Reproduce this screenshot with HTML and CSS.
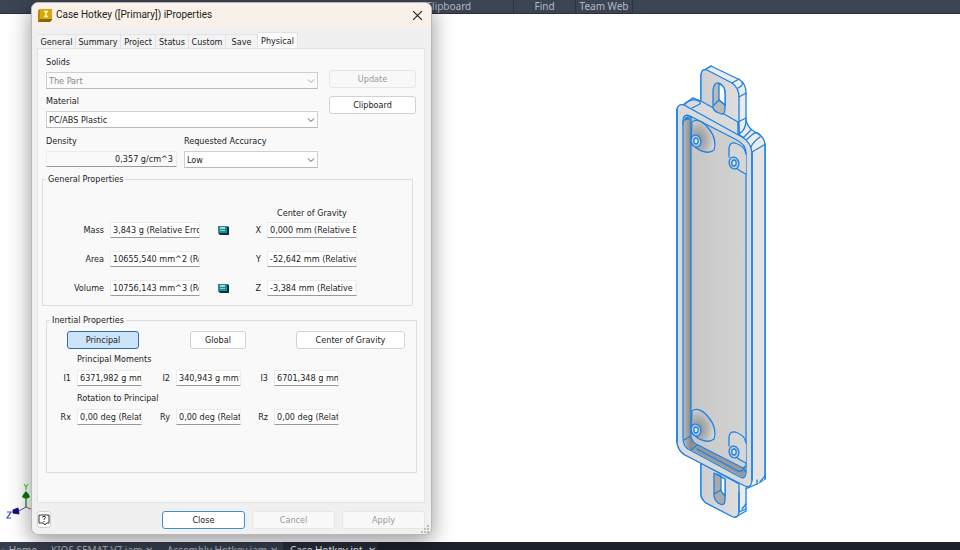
FILE: index.html
```html
<!DOCTYPE html>
<html lang="en">
<head>
<meta charset="utf-8">
<title>Case Hotkey iProperties</title>
<link rel="stylesheet" href="styles.css">
</head>
<body>
<header class="ribbon">
  <span class="panel-name panel-clip">Clipboard</span>
  <span class="panel-name panel-find">Find</span>
  <span class="panel-name panel-team">Team Web</span>
</header>

<main class="canvas">
  <svg class="model" viewBox="670 60 100 462" aria-hidden="true">
    <defs>
      <linearGradient id="floor" x1="0" x2="1"><stop offset="0" stop-color="#c3c3c3"/><stop offset=".5" stop-color="#cdcdcd"/><stop offset="1" stop-color="#d2d2d2"/></linearGradient>
      <linearGradient id="wall" x1="0" x2="1"><stop offset="0" stop-color="#b5b5b5"/><stop offset=".5" stop-color="#8a8a8a"/><stop offset="1" stop-color="#a8a8a8"/></linearGradient>
      <linearGradient id="lip" x1="0" y1="0" x2="1" y2="0"><stop offset="0" stop-color="#cfcfcf"/><stop offset="1" stop-color="#dedede"/></linearGradient>
      <radialGradient id="boss" cx=".3" cy=".6" r=".7"><stop offset="0" stop-color="#8f8f8f"/><stop offset=".5" stop-color="#b0b0b0"/><stop offset="1" stop-color="#dadada"/></radialGradient>
    </defs>
    <g stroke="#1b82e6" stroke-width="1.3" stroke-linejoin="round" stroke-linecap="round" fill="none">
      <path fill="#ececec" d="M701 102V76Q701 71 706 69L711 66L740 80Q746 84 746 93V118Q746 125 752 130L760 135Q765 139 765 146V479L757 484L748 488L746 488V511L735 517.500L706 503Q701 499 701 494V463L685 455Q677 450 677 441V110Q677 106 683 105L693 98Z"/>
      <path fill="url(#lip)" d="M701 102V76Q701 68 707 70L732 83Q739 88 739 97V137Z"/>
      <path d="M706 69l5-3M732 83l7-4M739 97l7-4M738 88q6-3 4-6"/>
      <path fill="url(#lip)" d="M701 463V494Q701 499 706 503L732 516.500Q738 519 739 512V484Z"/>
      <path d="M739 493V512M739 512l7-3M746 504l-4 5"/>
      <path fill="#dadada" d="M683 105L693 98L701 101L738 122L740 137L746 140Z"/>
      <path d="M684 105q5-6 12-5q5 1 4 4l-8 4M738 122v13M739 134q7-4 7-14M738 122l8-4M739 135q5 2 4 3l8-8M746 140l7-6q4-3 7 1M751 147q2-5 9-10M752 152l12-7"/>
      <path fill="#e4e4e4" d="M752 153L765 146V479L757 484V478L752 481Z" stroke="none"/>
      <path d="M757 484V480M760 482l5-6"/>
      <path fill="#dadada" d="M677 110Q678 103 684 105L742 137Q751 142 752 153V480Q751 490 743 485L685 455Q677 450 677 441Z"/>
      <path fill="url(#floor)" d="M683 122Q683 113 690 116L735 139Q746 144 746 153V471Q746 480 740 477L690 450Q683 447 683 438Z"/>
      <path fill="url(#wall)" stroke="none" d="M684 120Q684 116 691 117V436Q692 443 698 445L691 450Q684 447 684 438Z"/>
      <path fill="#999" stroke="none" d="M698 445L743 468L746 466V472Q745 479 740 476L690 449Z"/>
      <path d="M685 120q1-4 6-3V436Q692 443 698 445L743 468L746 466M684 440l7-4M691 450l6-5M697 449L738 471q5 1 6-3M743 468l3 4M683 124q-1-5 6-5"/>
      <path d="M765 144V479M752 153V480M677 110V441" stroke-width="1.500"/>
      <g id="bosses">
        <path fill="url(#boss)" d="M692 122C697 118 704 122 709 129C715 136 716 145 714 150C708 155 698 151 691 143Z"/>
        <ellipse cx="696" cy="141" rx="4.800" ry="6" fill="#c9cdd2" transform="rotate(-15 696 141)"/>
        <ellipse cx="696" cy="141" rx="2.200" ry="3" fill="#dfe4ea"/>
        <path fill="#d6d6d6" stroke="none" d="M729 157V148Q730 142 735 143Q745 146 746 155V174L737 168Z"/>
        <path d="M729 157V148Q730 142 735 143Q745 146 746 154M736 168Q741 172 746 174"/>
        <ellipse cx="734" cy="163" rx="4.800" ry="6" fill="#c9cdd2" transform="rotate(-15 734 163)"/>
        <ellipse cx="734" cy="163" rx="2.200" ry="3" fill="#dfe4ea"/>
      </g>
      <use href="#bosses" y="289"/>
      <path fill="#b9b9b9" d="M713 107V90Q714 82 719 83Q725 86 725 93V110Q724 116 719 113Q713 111 713 107Z"/>
      <path fill="#fff" d="M719 84Q725 86 725 93V105L719 100Z"/>
      <path d="M714 105l5-5M719 100l6 5"/>
      <path fill="#aaa" d="M714 473V496Q715 502 720 504Q725 506 725 500V479Z"/>
      <path fill="#fff" d="M721 477L725 479V496L721 491Z"/>
      <path d="M714 494l7-4M717 474l4 2"/>
    </g>
  </svg>
  <svg class="triad" viewBox="0 0 32 42" aria-hidden="true">
    <path d="M21 13v10" stroke="#2aa02a" stroke-width="1.500"/>
    <path d="M17 13q1-3 4-6q3 3 4 6q-4 3-8 0z" fill="#067a10"/>
    <path d="M19 0l2 3l2-3M21 3v3" fill="none" stroke="#4bd14b" stroke-width="1.200"/>
    <path d="M21 23l-9 5" stroke="#4a4ab0"/><path d="M21 23l9 4" stroke="#b04a4a"/>
    <path d="M8 26l5-2l1 6l-6-1z" fill="#10107c" stroke="#10107c"/>
    <path d="M2 28h4l-4 6h4" fill="none" stroke="#4545dd" stroke-width="1.200"/>
  </svg>
</main>

<nav class="doc-tabs">
  <a class="doc doc-home" href="#">⌂ Home</a>
  <a class="doc" href="#">KIOS SEMAT V7.iam ✕</a>
  <a class="doc" href="#">Assembly Hotkey.iam ✕</a>
  <a class="doc doc-active" href="#">Case Hotkey.ipt&nbsp; ✕</a>
</nav>

<section class="dialog" role="dialog" aria-labelledby="dlg-title">
  <div class="titlebar">
    <svg class="app-icon" viewBox="0 0 14 13" aria-hidden="true"><path d="M2 0h12v11l-2 2H0V2z" fill="#8a6500"/><path d="M2 0h12v10H2z" fill="#d6a80c"/><path d="M0 2l2-2v10l-2 3z" fill="#b98b00"/><path d="M6 2.500h4M8 2.500v5M6 7.500h4" stroke="#fff8d8" stroke-width="1.300"/></svg>
    <h1 id="dlg-title">Case Hotkey ([Primary]) iProperties</h1>
    <button class="close-x" type="button" aria-label="Close window"><svg viewBox="0 0 10 10"><path d="M1 1l8 8M9 1l-8 8" stroke="#222" stroke-width="1.100"/></svg></button>
  </div>

  <div class="tabs" role="tablist">
    <button type="button" role="tab">General</button>
    <button type="button" role="tab">Summary</button>
    <button type="button" role="tab">Project</button>
    <button type="button" role="tab">Status</button>
    <button type="button" role="tab">Custom</button>
    <button type="button" role="tab">Save</button>
    <button type="button" role="tab" class="selected" aria-selected="true">Physical</button>
  </div>

  <form class="sheet">
    <div class="top">
      <div class="fields">
        <label for="solids">Solids</label>
        <div class="combo disabled"><select id="solids" disabled><option>The Part</option></select><svg viewBox="0 0 8 8"><path d="M1 2.500l3 3l3-3"/></svg></div>
        <label for="material">Material</label>
        <div class="combo"><select id="material"><option>PC/ABS Plastic</option></select><svg viewBox="0 0 8 8"><path d="M1 2.500l3 3l3-3"/></svg></div>
        <div class="pair">
          <div class="density">
            <label for="density">Density</label>
            <input id="density" class="right" value="0,357 g/cm^3" readonly>
          </div>
          <div class="accuracy">
            <label for="accuracy">Requested Accuracy</label>
            <div class="combo"><select id="accuracy"><option>Low</option></select><svg viewBox="0 0 8 8"><path d="M1 2.500l3 3l3-3"/></svg></div>
          </div>
        </div>
      </div>
      <div class="actions">
        <button type="button" disabled>Update</button>
        <button type="button">Clipboard</button>
      </div>
    </div>

    <fieldset class="general">
      <legend>General Properties</legend>
      <div class="props">
        <span class="cog">Center of Gravity</span>
        <label for="mass">Mass</label><input id="mass" value="3,843 g (Relative Error = 0,1%)">
        <svg class="calc" viewBox="0 0 12 10" aria-hidden="true"><path d="M1 1h9l2 1v8H3l-2-2z" fill="#06354a"/><path d="M1 1h9v7H1z" fill="#238b91"/><path d="M3 3h5" stroke="#c9f3ed" stroke-width="1.500"/><path d="M3 5.500h5" stroke="#7ed0cc"/></svg>
        <label for="cx">X</label><input id="cx" value="0,000 mm (Relative Error = 0,1%)">
        <label for="area">Area</label><input id="area" value="10655,540 mm^2 (Relative Error)"><span></span>
        <label for="cy">Y</label><input id="cy" value="-52,642 mm (Relative Error)">
        <label for="volume">Volume</label><input id="volume" value="10756,143 mm^3 (Relative Error)">
        <svg class="calc" viewBox="0 0 12 10" aria-hidden="true"><path d="M1 1h9l2 1v8H3l-2-2z" fill="#06354a"/><path d="M1 1h9v7H1z" fill="#238b91"/><path d="M3 3h5" stroke="#c9f3ed" stroke-width="1.500"/><path d="M3 5.500h5" stroke="#7ed0cc"/></svg>
        <label for="cz">Z</label><input id="cz" value="-3,384 mm (Relative Error)">
      </div>
    </fieldset>

    <fieldset class="inertial">
      <legend>Inertial Properties</legend>
      <div class="modes">
        <button type="button" class="pressed" aria-pressed="true">Principal</button>
        <button type="button" class="global">Global</button>
        <button type="button" class="wide">Center of Gravity</button>
      </div>
      <h2>Principal Moments</h2>
      <div class="triple">
        <label for="i1">I1</label><input id="i1" value="6371,982 g mm^2">
        <label for="i2">I2</label><input id="i2" value="340,943 g mm^2">
        <label for="i3">I3</label><input id="i3" value="6701,348 g mm^2">
      </div>
      <h2>Rotation to Principal</h2>
      <div class="triple">
        <label for="rx">Rx</label><input id="rx" value="0,00 deg (Relative Error)">
        <label for="ry">Ry</label><input id="ry" value="0,00 deg (Relative Error)">
        <label for="rz">Rz</label><input id="rz" value="0,00 deg (Relative Error)">
      </div>
    </fieldset>
  </form>

  <footer class="foot">
    <button class="help" type="button" aria-label="Help"><svg viewBox="0 0 12 12"><path d="M1 1h10v8H8.500L7 11L5.500 9H1z" fill="#fff" stroke="#333"/><path d="M4.500 3.500q0-1.200 1.500-1.200t1.500 1.200q0 .8-1.500 1.500v.8M6 7v1" fill="none" stroke="#222"/></svg></button>
    <button class="primary" type="button">Close</button>
    <button type="button" disabled>Cancel</button>
    <button type="button" disabled>Apply</button>
  </footer>
  <svg class="grip" viewBox="0 0 8 8" aria-hidden="true"><path d="M6 0h2v2H6zM3 3h2v2H3zM6 3h2v2H6zM0 6h2v2H0zM3 6h2v2H3zM6 6h2v2H6z" fill="#bbb"/></svg>
</section>
</body>
</html>
```
FILE: styles.css
```css
* { box-sizing: border-box; }

body {
  margin: 0;
  min-height: 100vh;
  display: flex;
  flex-direction: column;
  position: relative;
  overflow: hidden;
  background: #fff;
  color: #222;
  font: 9px/12px "DejaVu Sans Condensed", "Noto Sans", sans-serif;
}

button, input, select { font: inherit; color: inherit; margin: 0; }

.ribbon {
  display: flex;
  height: 14px;
  padding-left: 384px;
  background: #3b4453;
  border-bottom: 1px solid #2a303c;
  color: #b4bac3;
  font: 10px/12px "Noto Sans", sans-serif;
}
.panel-name { border-right: 1px solid #2b323e; text-align: center; }
.panel-clip { width: 130px; }
.panel-find { width: 62px; }
.panel-team { width: 57px; }

.canvas { flex: 1; position: relative; }
.model { position: absolute; left: 670px; top: 46px; width: 100px; height: 462px; }
.triad { position: absolute; left: 5px; top: 470px; width: 32px; height: 42px; }

.doc-tabs {
  display: flex;
  height: 8px;
  overflow: hidden;
  background: #1c212b;
  font: 10px/16px "Noto Sans", sans-serif;
  white-space: nowrap;
}
.doc { width: 120px; padding-left: 4px; background: #353d4b; color: #aab0ba; text-decoration: none; }
.doc-home { width: 47px; padding-left: 0; }
.doc:nth-child(2) { width: 116px; }
.doc-active { width: 95px; padding-left: 7px; background: #252c38; color: #e2e5ea; }

.dialog {
  position: absolute;
  left: 31px;
  top: 2px;
  width: 401px;
  padding-bottom: 5px;
  background: #f0f0f0;
  border: 1px solid #b9b9b9;
  border-radius: 7px;
  box-shadow: 0 6px 22px rgba(0, 0, 0, .42);
}

.titlebar {
  display: flex;
  align-items: center;
  gap: 4px;
  height: 24px;
  padding: 0 8px 0 6px;
  border-radius: 6px 6px 0 0;
  background: #f9f1e9;
}
.titlebar h1 { flex: 1; margin: 0; font: 10px/14px Roboto, "Noto Sans", sans-serif; }
.app-icon { width: 14px; height: 13px; }
.close-x { width: 11px; height: 11px; padding: 0; border: 0; background: none; }
.close-x svg { display: block; }

.tabs {
  display: grid;
  grid-template-columns: 38px 45px 35px 33px 37px 32px 40px;
  align-items: end;
  height: 20px;
  margin-top: 1px;
  padding-left: 6px;
}
.tabs button {
  height: 14px;
  padding: 0;
  border: 1px solid #e3e3e3;
  border-width: 1px 1px 0 0;
  background: #f3f3f3;
  white-space: nowrap;
}
.tabs .selected { height: 16px; background: #fafafa; }

.sheet {
  height: 455px;
  margin: 0 6px 0 5px;
  padding: 7px 7px 0 4px;
  border: 1px solid #e4e4e4;
  background: #f9f9f9;
}
.top { display: flex; justify-content: space-between; padding-left: 4px; }
.fields { width: 272px; }
.fields label { display: block; margin-bottom: 4px; }
.fields > label:nth-of-type(n+2) { margin-top: 6px; }
.pair { display: flex; gap: 7px; margin-top: 7px; }
.density { flex: 131; }
.accuracy { flex: 134; }
.density input { width: 100%; background: #f9f9f9; }

.combo {
  display: grid;
  height: 17px;
  border: 1px solid #cfcfcf;
  border-bottom-color: #b9b9b9;
  background: #fff;
}
.combo select {
  grid-area: 1 / 1;
  width: 100%;
  min-width: 0;
  height: 15px;
  padding: 0 2px;
  border: 0;
  background: none;
  appearance: none;
  opacity: 1;
}
.combo svg {
  grid-area: 1 / 1;
  place-self: center end;
  width: 8px;
  height: 8px;
  margin-right: 2px;
  fill: none;
  stroke: #555;
  pointer-events: none;
}
.combo.disabled { color: #888; background: #fafafa; }
.combo.disabled svg { stroke: #aaa; }

input {
  min-width: 0;
  height: 16px;
  padding: 0 0 0 2px;
  border: 1px solid #ececec;
  border-bottom-color: #999;
  border-radius: 1px;
  background: #fff;
  outline: 0;
}
.right { text-align: right; padding-right: 3px; }

.actions { display: flex; flex-direction: column; gap: 8px; width: 87px; margin-right: 1px; padding-top: 14px; }
.actions button, .modes button, .foot button {
  height: 18px;
  padding: 0;
  border: 1px solid #d2d2d2;
  border-radius: 3px;
  background: #fff;
}
.actions button:disabled, .foot button:disabled { background: #f8f8f8; border-color: #e6e6e6; color: #999; }

fieldset { margin: 0; padding: 0; border: 1px solid #dedede; }
legend { padding: 0 2px; margin-left: 3px; }
.general { height: 133px; margin: 5px 4px 0 0; }
.inertial { height: 159px; margin: 8px 0 0 4px; }

.props {
  display: grid;
  grid-template-columns: 61px 90px 34px 15px 90px;
  grid-template-rows: 12px 22px 36px 22px;
  column-gap: 6px;
  align-items: center;
  margin-top: 22px;
}
.props label { text-align: right; }
.cog { grid-column: 5; padding-left: 10px; white-space: nowrap; }
.calc { width: 12px; height: 10px; justify-self: center; }

.modes { display: flex; margin: 5px 11px 0 20px; }
.modes .pressed { width: 72px; border-color: #2f6ea6; background: #cce4f7; }
.modes .global { width: 56px; margin-left: 51px; }
.modes .wide { width: 109px; margin-left: auto; }
.inertial h2 { margin: 4px 0 5px 30px; font: inherit; }
.triple {
  display: grid;
  grid-template-columns: 24px 65px 22px 65px 21px 65px;
  column-gap: 6px;
  align-items: center;
}
.triple label { text-align: right; }
.inertial .triple + h2 { margin-top: 6px; }

.foot { display: flex; gap: 7px; margin-top: 8px; padding: 0 6px 0 5px; }
.foot button { width: 83px; }
.foot .help { width: 14px; height: 17px; margin-right: auto; }
.help svg { display: block; width: 12px; height: 12px; }
.foot .primary { border-color: #3c90cf; }
.grip { position: absolute; right: 2px; bottom: 1px; width: 8px; height: 8px; }
```
